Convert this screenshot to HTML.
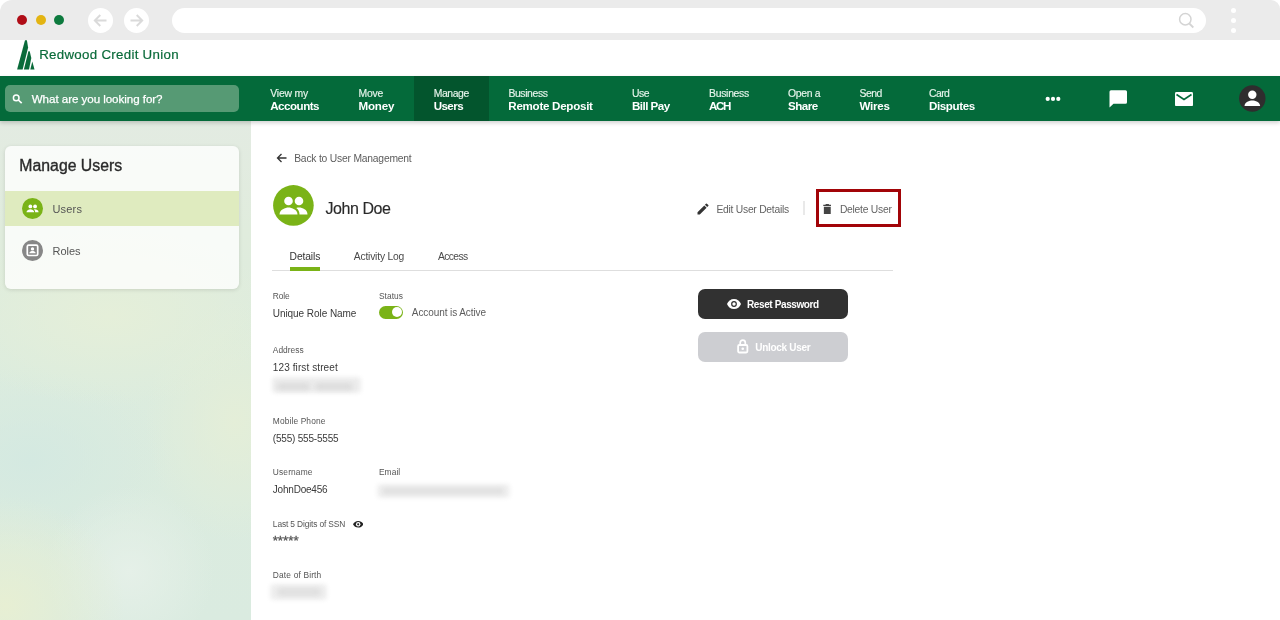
<!DOCTYPE html>
<html><head><meta charset="utf-8">
<style>
*{box-sizing:border-box;margin:0;padding:0}
html,body{width:1280px;height:620px;overflow:hidden;background:#fff;font-family:"Liberation Sans",sans-serif;color:#333}
.a{position:absolute}
.t{position:absolute;white-space:pre;line-height:1}
.dot{position:absolute;top:15px;width:10px;height:10px;border-radius:50%}
.navc{position:absolute;top:8px;width:25px;height:25px;border-radius:50%;background:#fff}
.blur{position:absolute;filter:blur(2.5px);border-radius:4px}
</style></head><body>
<!-- browser chrome -->
<div class="a" style="left:0;top:0;width:1280px;height:40px;background:#ebebeb;border-radius:12px 9px 0 0"></div>
<div class="dot" style="left:17px;background:#b00d17"></div>
<div class="dot" style="left:35.500px;background:#e3b412"></div>
<div class="dot" style="left:53.700px;background:#0d7a3e"></div>
<div class="navc" style="left:88px"><svg width="25" height="25" viewBox="0 0 25 25"><path d="M18.500 12.500H7M12.300 7l-5.500 5.500 5.500 5.500" stroke="#dadada" stroke-width="1.900" fill="none"/></svg></div>
<div class="navc" style="left:124px"><svg width="25" height="25" viewBox="0 0 25 25"><path d="M6.500 12.500H18M12.700 7l5.500 5.500-5.500 5.500" stroke="#dadada" stroke-width="1.900" fill="none"/></svg></div>
<div class="a" style="left:172px;top:8px;width:1034px;height:25px;border-radius:13px;background:#fff"></div>
<svg class="a" style="left:1177px;top:12px" width="18" height="18" viewBox="0 0 18 18"><circle cx="8.300" cy="7.300" r="5.700" stroke="#d4d4d4" stroke-width="1.500" fill="none"/><path d="M12.300 11.500l4 4" stroke="#d4d4d4" stroke-width="1.800"/></svg>
<div class="a" style="left:1231px;top:8px;width:5px;height:5px;border-radius:50%;background:#fff"></div>
<div class="a" style="left:1231px;top:18px;width:5px;height:5px;border-radius:50%;background:#fff"></div>
<div class="a" style="left:1231px;top:28px;width:5px;height:5px;border-radius:50%;background:#fff"></div>
<!-- logo -->
<svg class="a" style="left:16px;top:40px" width="20" height="31" viewBox="0 0 20 31"><path d="M9 0.2L10.9 0.2L12.1 7.6L6.6 29.5L1.100 29.500Z" fill="#0a6b3a"/><path d="M12.4 11.2L13.7 11.2L15.3 17.9L13 29.500L7.900 29.500Z" fill="#0a6b3a"/><path d="M16.300 21.500L18.500 29.500L14.300 29.500Z" fill="#0a6b3a"/></svg>
<!-- sidebar bg -->
<div class="a" id="side" style="left:0;top:121px;width:251px;height:499px;background:radial-gradient(ellipse 170px 90px at 110px 195px,#e5efd9 0%,rgba(229,239,217,0) 100%),radial-gradient(ellipse 90px 120px at 235px 300px,#e4eed8 0%,rgba(228,238,216,0) 100%),radial-gradient(ellipse 120px 110px at 5px 485px,#e7efd3 0%,rgba(231,239,211,0) 100%),radial-gradient(ellipse 85px 85px at 130px 450px,#e5f0e8 0%,rgba(229,240,232,0) 100%),radial-gradient(ellipse 140px 95px at 30px 340px,#d4e9e1 0%,rgba(212,233,225,0) 100%),linear-gradient(180deg,#e3ebe2 0%,#e0ecdd 22%,#dcecde 50%,#daebe0 100%)"></div>
<!-- nav -->
<div class="a" style="left:0;top:76px;width:1280px;height:45px;background:#046a3a;box-shadow:0 2px 4px rgba(0,0,0,.18)"></div>
<div class="a" style="left:414px;top:76px;width:75px;height:45px;background:#03552d"></div>
<div class="a" style="left:5px;top:85px;width:234px;height:27px;border-radius:5px;background:#569a74"></div>
<svg class="a" style="left:12px;top:94px" width="11" height="10" viewBox="0 0 11 10"><circle cx="4.200" cy="3.900" r="2.800" stroke="#fff" stroke-width="1.500" fill="none"/><path d="M6.300 6l3.400 3.200" stroke="#fff" stroke-width="1.700"/></svg>
<svg class="a" style="left:1045px;top:96px" width="16" height="6" viewBox="0 0 16 6"><circle cx="2.700" cy="2.900" r="2.100" fill="#fff"/><circle cx="8" cy="2.900" r="2.100" fill="#fff"/><circle cx="13.300" cy="2.900" r="2.100" fill="#fff"/></svg>
<svg class="a" style="left:1109px;top:90px" width="19" height="19" viewBox="0 0 19 19"><path d="M2 0.300h14.500a1.500 1.500 0 0 1 1.500 1.500v10.500a1.500 1.500 0 0 1-1.500 1.500H4.500L0.500 17.500V1.800A1.500 1.500 0 0 1 2 0.300z" fill="#fff"/></svg>
<svg class="a" style="left:1174.500px;top:91.700px" width="18" height="14.300" viewBox="0 0 18 14.300"><rect x="0" y="0" width="18" height="14.300" rx="1.500" fill="#fff"/><path d="M1.500 2.500l7.500 5 7.500-5" stroke="#046a3a" stroke-width="1.600" fill="none"/></svg>
<svg class="a" style="left:1239px;top:85px" width="27" height="27" viewBox="0 0 27 27"><circle cx="13.300" cy="13.500" r="13.200" fill="#2f2d2e"/><circle cx="13.300" cy="9.700" r="4.200" fill="#fff"/><path d="M5.500 21c0-3.800 5-5.500 7.800-5.500s7.800 1.700 7.800 5.500z" fill="#fff"/></svg>
<!-- sidebar card -->
<div class="a" style="left:5px;top:146px;width:234px;height:143px;border-radius:6px;background:rgba(255,255,255,.78);box-shadow:0 1px 4px rgba(0,0,0,.12)"></div>
<div class="a" style="left:5px;top:191px;width:234px;height:35px;background:#dfebbf"></div>
<svg class="a" style="left:22px;top:198px" width="21" height="21" viewBox="0 0 21 21"><circle cx="10.500" cy="10.500" r="10.500" fill="#7ab317"/><g transform="translate(10.5 10.5) scale(.86) translate(-10.5 -10.7)"><circle cx="8" cy="8.300" r="2.200" fill="#fff"/><circle cx="13.500" cy="8.300" r="2.200" fill="#fff"/><path d="M3.500 15c0-2.500 3-3.500 4.500-3.500s4.500 1 4.500 3.500z" fill="#fff"/><path d="M13.300 11.600c1.800 0 4.300 1 4.300 3.400h-4c0-1.500-.6-2.600-1.600-3.300.5-.1.900-.1 1.300-.1z" fill="#fff"/></g></svg>
<svg class="a" style="left:22px;top:240px" width="21" height="21" viewBox="0 0 21 21"><circle cx="10.500" cy="10.500" r="10.500" fill="#878787"/><rect x="5.300" y="5.100" width="10.400" height="10.400" rx="1.400" fill="none" stroke="#fff" stroke-width="1.700"/><circle cx="10.500" cy="8.900" r="1.700" fill="#fff"/><path d="M7.300 13.300c0-1.600 2.100-2.200 3.200-2.200s3.200.6 3.200 2.200z" fill="#fff"/></svg>
<!-- main -->
<svg class="a" style="left:276px;top:152.500px" width="11" height="10" viewBox="0 0 11 10"><path d="M10.500 5H1.500M5.500 1L1.500 5l4 4" stroke="#333" stroke-width="1.300" fill="none"/></svg>
<svg class="a" style="left:273px;top:185.200px" width="41" height="41" viewBox="0 0 41 41"><circle cx="20.400" cy="20.400" r="20.300" fill="#7ab317"/><circle cx="15.500" cy="16" r="4.300" fill="#fff"/><circle cx="26" cy="16" r="4.300" fill="#fff"/><path d="M6.500 29.500c0-5 6-7 9-7s9 2 9 7z" fill="#fff"/><path d="M26 22.500c3.500 0 8.500 2 8.500 7h-8c0-3-1.200-5.200-3.200-6.600 1-.3 1.900-.4 2.700-.4z" fill="#fff"/></svg>
<svg class="a" style="left:697px;top:203px" width="12" height="12" viewBox="0 0 12 12"><path d="M0.500 9.200V11.500h2.300l6.800-6.800-2.300-2.300zM11.300 2.900a.6.600 0 0 0 0-.9L9.900.7a.6.600 0 0 0-.9 0L7.900 1.800l2.300 2.300z" fill="#333"/></svg>
<div class="a" style="left:803px;top:201px;width:2px;height:14px;background:#e9e9e9"></div>
<div class="a" style="left:816px;top:189px;width:85px;height:38px;border:3px solid #a20408"></div>
<svg class="a" style="left:822.500px;top:203.500px" width="8.600" height="10.800" viewBox="0 0 10 12" preserveAspectRatio="none"><path d="M1 11a1.200 1.200 0 0 0 1.200 1h5.600A1.200 1.200 0 0 0 9 11V3H1zM9.700.8H7.300L6.600 0H3.400l-.7.8H.3v1.400h9.400z" fill="#444"/></svg>
<div class="a" style="left:272px;top:270px;width:621px;height:1px;background:#dedede"></div>
<div class="a" style="left:290px;top:267px;width:30px;height:4px;background:#7ab317"></div>
<div class="a" style="left:379px;top:306px;width:24px;height:12.500px;border-radius:7px;background:#7ab317"><div class="a" style="left:12.500px;top:1.100px;width:10.300px;height:10.300px;border-radius:50%;background:#fff"></div></div>
<!-- blurred redactions -->
<div class="blur" style="left:272px;top:377px;width:89px;height:15.500px;background:#ededed;filter:blur(2px)"></div>
<div class="blur" style="left:277px;top:382.500px;width:33px;height:7px;background:#dcdcdc;filter:blur(2.500px)"></div>
<div class="blur" style="left:315px;top:382.500px;width:38px;height:7px;background:#dcdcdc;filter:blur(2.500px)"></div>
<div class="blur" style="left:376.500px;top:483.500px;width:133px;height:14.500px;background:#f0f0f0;filter:blur(2px)"></div>
<div class="blur" style="left:382px;top:487.500px;width:122px;height:6px;background:#dedede;filter:blur(2.500px)"></div>
<div class="blur" style="left:270px;top:583.500px;width:57px;height:16px;background:#efefef;filter:blur(2px)"></div>
<div class="blur" style="left:277px;top:588px;width:44px;height:8px;background:#dfdfdf;filter:blur(2.500px)"></div>
<svg class="a" style="left:352.600px;top:521.200px" width="10.400" height="6.600" viewBox="0 0 11 7"><path d="M5.500 0C3 0 .9 1.400 0 3.500c.9 2.100 3 3.500 5.500 3.500S10.100 5.600 11 3.500C10.100 1.400 8 0 5.500 0z" fill="#222"/><circle cx="5.500" cy="3.500" r="2.350" fill="#fff"/><circle cx="5.500" cy="3.500" r="1.150" fill="#222"/></svg>
<!-- buttons -->
<div class="a" style="left:698px;top:289px;width:150px;height:30px;border-radius:7px;background:#313131"></div>
<svg class="a" style="left:727px;top:299px" width="14" height="10" viewBox="0 0 14 10"><path d="M7 0C3.800 0 1.100 2 0 5c1.100 3 3.800 5 7 5s5.900-2 7-5c-1.100-3-3.800-5-7-5z" fill="#fff"/><circle cx="7" cy="5" r="2.900" fill="#2f2f2f"/><circle cx="7" cy="5" r="1.700" fill="#fff"/></svg>
<div class="a" style="left:698px;top:332px;width:150px;height:30px;border-radius:7px;background:#cdced2"></div>
<svg class="a" style="left:737px;top:339px" width="11.500" height="14.500" viewBox="0 0 11.500 14.500"><rect x="1.100" y="6" width="9.300" height="7.500" rx="1.200" fill="none" stroke="#fff" stroke-width="1.800"/><path d="M3.200 6V3.700a2.550 2.550 0 0 1 5.100 0V6" fill="none" stroke="#fff" stroke-width="1.700"/><circle cx="5.750" cy="9.800" r="1.300" fill="#fff"/></svg>
<div id="tx" style="position:absolute;left:0;top:0;width:1280px;height:620px;will-change:transform">
<div class="t" style="left:270.28px;top:88.90px;font-size:10.4px;font-weight:normal;color:#e6f4eb;letter-spacing:-0.191px;-webkit-text-stroke:0.15px #e6f4eb;">View my</div>
<div class="t" style="left:358.48px;top:88.90px;font-size:10.4px;font-weight:normal;color:#e6f4eb;letter-spacing:-0.197px;-webkit-text-stroke:0.15px #e6f4eb;">Move</div>
<div class="t" style="left:433.68px;top:88.90px;font-size:10.4px;font-weight:normal;color:#e6f4eb;letter-spacing:-0.406px;-webkit-text-stroke:0.15px #e6f4eb;">Manage</div>
<div class="t" style="left:508.38px;top:88.90px;font-size:10.4px;font-weight:normal;color:#e6f4eb;letter-spacing:-0.377px;-webkit-text-stroke:0.15px #e6f4eb;">Business</div>
<div class="t" style="left:631.98px;top:88.90px;font-size:10.4px;font-weight:normal;color:#e6f4eb;letter-spacing:-0.476px;-webkit-text-stroke:0.15px #e6f4eb;">Use</div>
<div class="t" style="left:709.08px;top:88.90px;font-size:10.4px;font-weight:normal;color:#e6f4eb;letter-spacing:-0.291px;-webkit-text-stroke:0.15px #e6f4eb;">Business</div>
<div class="t" style="left:787.98px;top:88.90px;font-size:10.4px;font-weight:normal;color:#e6f4eb;letter-spacing:-0.312px;-webkit-text-stroke:0.15px #e6f4eb;">Open a</div>
<div class="t" style="left:859.58px;top:88.90px;font-size:10.4px;font-weight:normal;color:#e6f4eb;letter-spacing:-0.483px;-webkit-text-stroke:0.15px #e6f4eb;">Send</div>
<div class="t" style="left:928.98px;top:88.90px;font-size:10.4px;font-weight:normal;color:#e6f4eb;letter-spacing:-0.533px;-webkit-text-stroke:0.15px #e6f4eb;">Card</div>
<div class="t" style="left:270.24px;top:100.20px;font-size:11.6px;font-weight:bold;color:#fff;letter-spacing:-0.500px;">Accounts</div>
<div class="t" style="left:358.44px;top:100.20px;font-size:11.6px;font-weight:bold;color:#fff;letter-spacing:-0.173px;">Money</div>
<div class="t" style="left:433.64px;top:100.20px;font-size:11.6px;font-weight:bold;color:#fff;letter-spacing:-0.552px;">Users</div>
<div class="t" style="left:508.34px;top:100.20px;font-size:11.6px;font-weight:bold;color:#fff;letter-spacing:-0.280px;">Remote Deposit</div>
<div class="t" style="left:631.94px;top:100.20px;font-size:11.6px;font-weight:bold;color:#fff;letter-spacing:-0.523px;">Bill Pay</div>
<div class="t" style="left:709.04px;top:100.20px;font-size:11.6px;font-weight:bold;color:#fff;letter-spacing:-1.348px;">ACH</div>
<div class="t" style="left:787.94px;top:100.20px;font-size:11.6px;font-weight:bold;color:#fff;letter-spacing:-0.477px;">Share</div>
<div class="t" style="left:859.54px;top:100.20px;font-size:11.6px;font-weight:bold;color:#fff;letter-spacing:-0.264px;">Wires</div>
<div class="t" style="left:928.94px;top:100.20px;font-size:11.6px;font-weight:bold;color:#fff;letter-spacing:-0.377px;">Disputes</div>
<div class="t" style="left:39.17px;top:47.90px;font-size:13.3px;font-weight:normal;color:#0a6b3a;letter-spacing:0.294px;-webkit-text-stroke:0.2px #0a6b3a;">Redwood Credit Union</div>
<div class="t" style="left:31.74px;top:93.00px;font-size:11.6px;font-weight:normal;color:#fff;letter-spacing:-0.054px;-webkit-text-stroke:0.25px #fff;">What are you looking for?</div>
<div class="t" style="left:19.37px;top:158.10px;font-size:15.8px;font-weight:normal;color:#2a2a2a;letter-spacing:0.003px;-webkit-text-stroke:0.35px #2a2a2a;">Manage Users</div>
<div class="t" style="left:52.46px;top:203.80px;font-size:11px;font-weight:normal;color:#555;letter-spacing:0.186px;">Users</div>
<div class="t" style="left:52.46px;top:245.60px;font-size:11px;font-weight:normal;color:#555;letter-spacing:-0.011px;">Roles</div>
<div class="t" style="left:294.19px;top:153.50px;font-size:10.3px;font-weight:normal;color:#5c5c5c;letter-spacing:-0.199px;">Back to User Management</div>
<div class="t" style="left:325.56px;top:200.90px;font-size:16px;font-weight:normal;color:#2a2a2a;letter-spacing:-0.446px;-webkit-text-stroke:0.15px #2a2a2a;">John Doe</div>
<div class="t" style="left:716.39px;top:204.80px;font-size:10.3px;font-weight:normal;color:#636363;letter-spacing:-0.241px;">Edit User Details</div>
<div class="t" style="left:839.89px;top:204.80px;font-size:10.3px;font-weight:normal;color:#636363;letter-spacing:-0.235px;">Delete User</div>
<div class="t" style="left:289.59px;top:252.40px;font-size:10.3px;font-weight:normal;color:#333;letter-spacing:-0.127px;">Details</div>
<div class="t" style="left:353.79px;top:252.40px;font-size:10.3px;font-weight:normal;color:#4a4a4a;letter-spacing:-0.194px;">Activity Log</div>
<div class="t" style="left:437.99px;top:252.40px;font-size:10.3px;font-weight:normal;color:#4a4a4a;letter-spacing:-0.596px;">Access</div>
<div class="t" style="left:272.86px;top:292.20px;font-size:8.4px;font-weight:normal;color:#555;letter-spacing:-0.154px;">Role</div>
<div class="t" style="left:378.96px;top:292.20px;font-size:8.4px;font-weight:normal;color:#555;letter-spacing:0.044px;">Status</div>
<div class="t" style="left:272.86px;top:346.00px;font-size:8.4px;font-weight:normal;color:#555;letter-spacing:0.006px;">Address</div>
<div class="t" style="left:272.86px;top:417.00px;font-size:8.4px;font-weight:normal;color:#555;letter-spacing:0.114px;">Mobile Phone</div>
<div class="t" style="left:272.86px;top:468.20px;font-size:8.4px;font-weight:normal;color:#555;letter-spacing:0.133px;">Username</div>
<div class="t" style="left:378.96px;top:468.20px;font-size:8.4px;font-weight:normal;color:#555;letter-spacing:0.080px;">Email</div>
<div class="t" style="left:272.86px;top:520.30px;font-size:8.4px;font-weight:normal;color:#555;letter-spacing:-0.131px;">Last 5 Digits of SSN</div>
<div class="t" style="left:272.86px;top:570.50px;font-size:8.4px;font-weight:normal;color:#555;letter-spacing:0.151px;">Date of Birth</div>
<div class="t" style="left:272.80px;top:308.50px;font-size:10px;font-weight:normal;color:#3a3a3a;letter-spacing:-0.060px;">Unique Role Name</div>
<div class="t" style="left:411.80px;top:308.00px;font-size:10px;font-weight:normal;color:#5c5c5c;letter-spacing:-0.081px;">Account is Active</div>
<div class="t" style="left:272.80px;top:363.00px;font-size:10px;font-weight:normal;color:#3a3a3a;letter-spacing:0.103px;">123 first street</div>
<div class="t" style="left:272.80px;top:433.80px;font-size:10px;font-weight:normal;color:#3a3a3a;letter-spacing:-0.199px;">(555) 555-5555</div>
<div class="t" style="left:272.80px;top:485.30px;font-size:10px;font-weight:normal;color:#3a3a3a;letter-spacing:-0.213px;">JohnDoe456</div>
<div class="t" style="left:747.00px;top:299.80px;font-size:10px;font-weight:bold;color:#fff;letter-spacing:-0.390px;">Reset Password</div>
<div class="t" style="left:755.30px;top:343.00px;font-size:10px;font-weight:bold;color:#fff;letter-spacing:-0.296px;">Unlock User</div>
<div class="t" style="left:272.700px;top:534px;font-size:13.300px;color:#555;-webkit-text-stroke:0.3px #555">*****</div>
</div>
</body></html>
